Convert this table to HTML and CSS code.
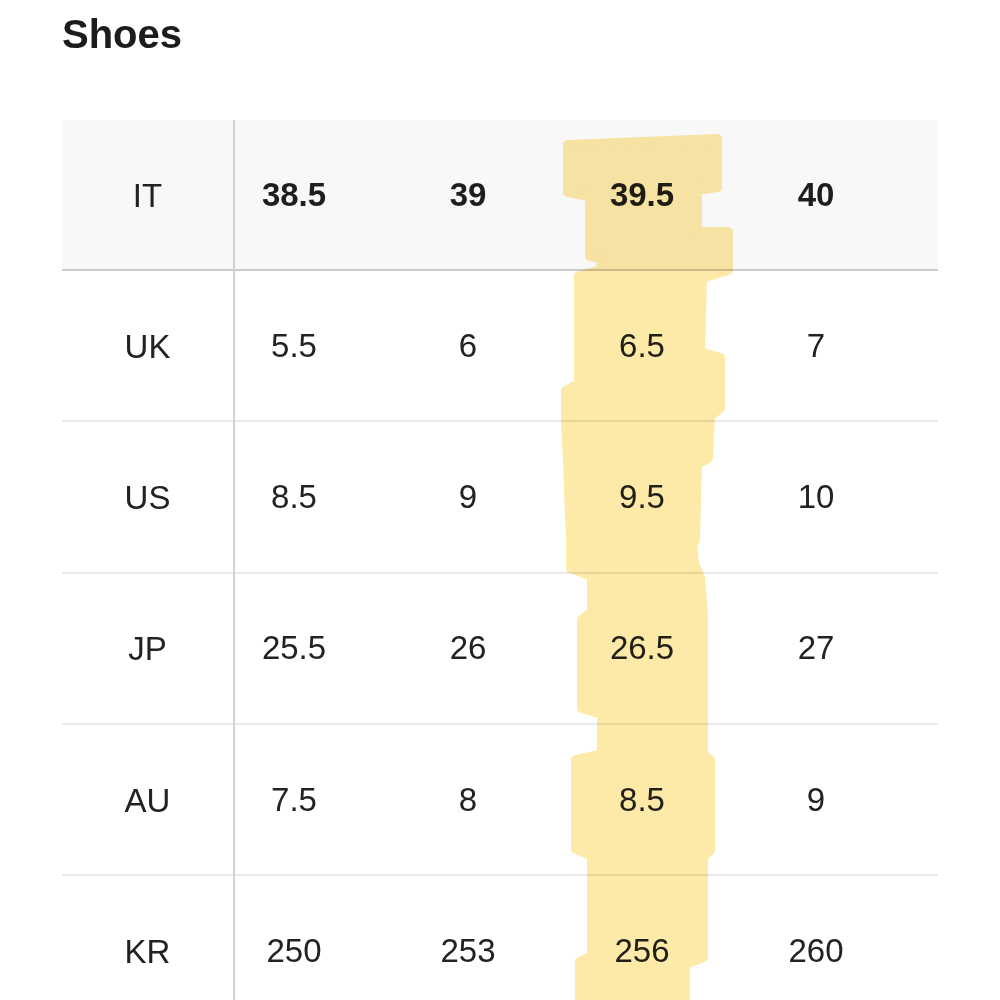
FILE: index.html
```html
<!DOCTYPE html>
<html>
<head>
<meta charset="utf-8">
<link rel="stylesheet" href="styles.css">
</head>
<body>
<div class="page">
  <h1 class="title">Shoes</h1>
  <div class="table">
    <div class="row head">
      <div class="label">IT</div>
      <div class="val">38.5</div>
      <div class="val">39</div>
      <div class="val">39.5</div>
      <div class="val">40</div>
    </div>
    <div class="row">
      <div class="label">UK</div>
      <div class="val">5.5</div>
      <div class="val">6</div>
      <div class="val">6.5</div>
      <div class="val">7</div>
    </div>
    <div class="row">
      <div class="label">US</div>
      <div class="val">8.5</div>
      <div class="val">9</div>
      <div class="val">9.5</div>
      <div class="val">10</div>
    </div>
    <div class="row">
      <div class="label">JP</div>
      <div class="val">25.5</div>
      <div class="val">26</div>
      <div class="val">26.5</div>
      <div class="val">27</div>
    </div>
    <div class="row">
      <div class="label">AU</div>
      <div class="val">7.5</div>
      <div class="val">8</div>
      <div class="val">8.5</div>
      <div class="val">9</div>
    </div>
    <div class="row">
      <div class="label">KR</div>
      <div class="val">250</div>
      <div class="val">253</div>
      <div class="val">256</div>
      <div class="val">260</div>
    </div>
  </div>
  <svg class="marker" width="1000" height="1000" viewBox="0 0 1000 1000" aria-hidden="true">
    <path d="M568 145 L717 139 L717 187 L697 190 L697 232 L728 232 L728 270 L702 278 L700 352 L720 358 L720 408 L710 416 L708 458 L697 464 L695 540 L692 545 L694 564 L700 577 L703 615 L703 755 L710 760 L710 850 L703 857 L703 957 L685 964 L685 1005 L580 1005 L580 962 L592 956 L592 855 L576 849 L576 760 L602 754 L602 714 L582 708 L582 620 L592 612 L592 576 L571 568 L571 540 L568 462 L566 422 L566 391 L579 384 L579 276 L602 270 L601 258 L590 256 L590 196 L568 192 Z"/>
  </svg>
</div>
</body>
</html>
```

FILE: styles.css
```css
html, body {
  margin: 0;
  padding: 0;
  background: #ffffff;
}

.page {
  position: relative;
  width: 1000px;
  height: 1000px;
  overflow: hidden;
  padding-left: 62px;
  box-sizing: border-box;
  font-family: "Liberation Sans", Arial, sans-serif;
  color: #222222;
}

.title {
  margin: 0 0 62px 0;
  padding-top: 10px;
  font-size: 40px;
  line-height: 48px;
  font-weight: 700;
  color: #1c1c1c;
}

.table {
  width: 876px;
}

.row {
  display: grid;
  grid-template-columns: 173px repeat(4, 174px);
  height: 151.3px;
  box-sizing: border-box;
  border-bottom: 2px solid #e9e9e9;
  font-size: 33px;
}

.row.head {
  height: 151px;
  background: #f8f8f8;
  border-bottom: 2px solid #cbcbcb;
}

.label {
  display: flex;
  align-items: center;
  justify-content: center;
  border-right: 2px solid #d0d0d0;
  margin-bottom: -2px;
}

.val {
  display: flex;
  align-items: center;
  justify-content: center;
  padding-right: 56px;
}

.head .val {
  font-weight: 700;
  color: #1e1e1e;
}

.marker {
  position: absolute;
  top: 0;
  left: 0;
  pointer-events: none;
  mix-blend-mode: multiply;
}

.marker path {
  fill: #fde9a8;
  stroke: #fde9a8;
  stroke-width: 10;
  stroke-linejoin: round;
}
```
